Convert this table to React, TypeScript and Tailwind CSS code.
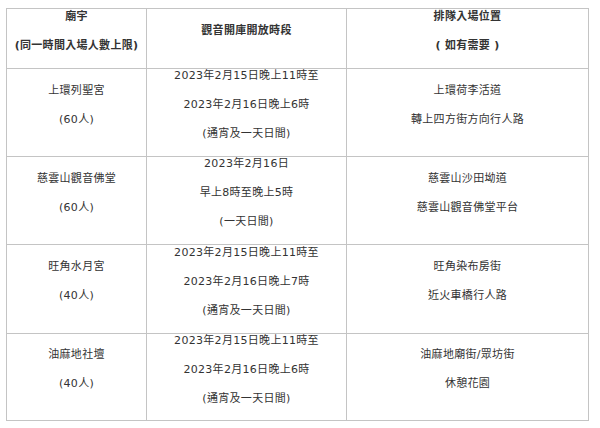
const rows: { h: string; cells: string[][] }[] = [
  {
    h: "h-[88px]",
    cells: [
      ["上環列聖宮", "(60人)"],
      ["2023年2月15日晚上11時至", "2023年2月16日晚上6時", "(通宵及一天日間)"],
      ["上環荷李活道", "轉上四方街方向行人路"],
    ],
  },
  {
    h: "h-[88px]",
    cells: [
      ["慈雲山觀音佛堂", "(60人)"],
      ["2023年2月16日", "早上8時至晚上5時", "(一天日間)"],
      ["慈雲山沙田坳道", "慈雲山觀音佛堂平台"],
    ],
  },
  {
    h: "h-[89px]",
    cells: [
      ["旺角水月宮", "(40人)"],
      ["2023年2月15日晚上11時至", "2023年2月16日晚上7時", "(通宵及一天日間)"],
      ["旺角染布房街", "近火車橋行人路"],
    ],
  },
  {
    h: "h-[87px]",
    cells: [
      ["油麻地社壇", "(40人)"],
      ["2023年2月15日晚上11時至", "2023年2月16日晚上6時", "(通宵及一天日間)"],
      ["油麻地廟街/眾坊街", "休憩花園"],
    ],
  },
];

function Cell({ lines, bold, h }: { lines: string[]; bold?: boolean; h: string }) {
  return (
    <div
      className={`${h} flex flex-col items-center justify-center border-r border-b border-[#c4c4c4] text-center ${
        bold ? "font-bold" : ""
      }`}
    >
      {lines.map((t, i) => (
        <p key={i} className="leading-[14px] mb-[15px] whitespace-nowrap">
          {t}
        </p>
      ))}
    </div>
  );
}

export default function App() {
  return (
    <div
      className="w-[600px] h-[428px] bg-white pt-[8px] pl-[6px] text-[11px] tracking-[0.3px] text-[#333]"
      style={{ fontFamily: '"DejaVu Sans", "Noto Sans CJK TC", sans-serif' }}
    >
      <div className="grid grid-cols-[140px_200px_242px] w-fit border-l border-t border-[#c4c4c4]">
        <Cell bold h="h-[60px]" lines={["廟宇", "(同一時間入場人數上限)"]} />
        <Cell bold h="h-[60px]" lines={["觀音開庫開放時段"]} />
        <Cell bold h="h-[60px]" lines={["排隊入場位置", "( 如有需要 )"]} />
        {rows.map((r, i) =>
          r.cells.map((c, j) => <Cell key={`${i}-${j}`} h={r.h} lines={c} />)
        )}
      </div>
    </div>
  );
}
